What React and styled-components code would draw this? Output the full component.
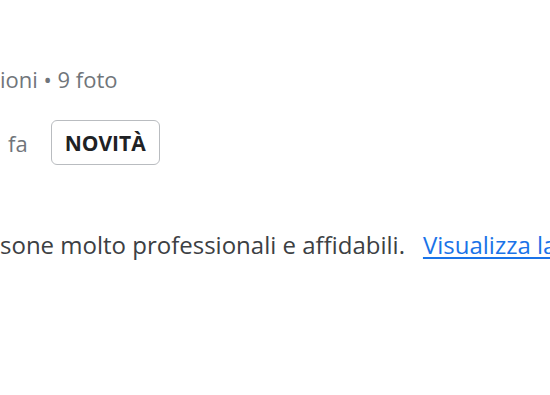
import React from 'react';
import styled, {createGlobalStyle} from "styled-components";

const GlobalStyle = createGlobalStyle`
    html, body {
        margin: 0;
        padding: 0;
        background: #ffffff;
    }
    body {
        font-family: "Open Sans", Roboto, Arial, sans-serif;
        overflow: hidden;
    }
`

const Review = styled.div`
    width: 550px;
    height: 395px;
    overflow: hidden;
    padding-top: 64px;
    box-sizing: border-box;
    white-space: nowrap;
`

const Meta = styled.div`
    font-size: 22px;
    line-height: 30px;
    color: #70757a;
`

const DateRow = styled.div`
    display: flex;
    align-items: center;
    gap: 23px;
    margin-top: 26px;
    padding-left: 8px;
    font-size: 22px;
    color: #70757a;
`

const Badge = styled.span`
    display: inline-flex;
    align-items: center;
    justify-content: center;
    height: 45px;
    padding: 0 13px;
    box-sizing: border-box;
    border: 1px solid #b9bcc0;
    border-radius: 6px;
    font-size: 21px;
    font-weight: 700;
    color: #202124;
`

const Text = styled.p`
    margin: 64px 0 0;
    font-size: 24px;
    line-height: 32px;
    color: #3c4043;
`

const Link = styled.a`
    margin-left: 18px;
    color: #1a73e8;
    text-decoration: underline;
    text-underline-offset: 3px;
`

const App = () => {
    return (
        <>
            <GlobalStyle/>
            <Review>
                <Meta>ioni • 9 foto</Meta>
                <DateRow>
                    <span>fa</span>
                    <Badge>NOVITÀ</Badge>
                </DateRow>
                <Text>
                    sone molto professionali e affidabili.
                    <Link href="#">Visualizza la recensione</Link>
                </Text>
            </Review>
        </>
    );
};

export default App;
